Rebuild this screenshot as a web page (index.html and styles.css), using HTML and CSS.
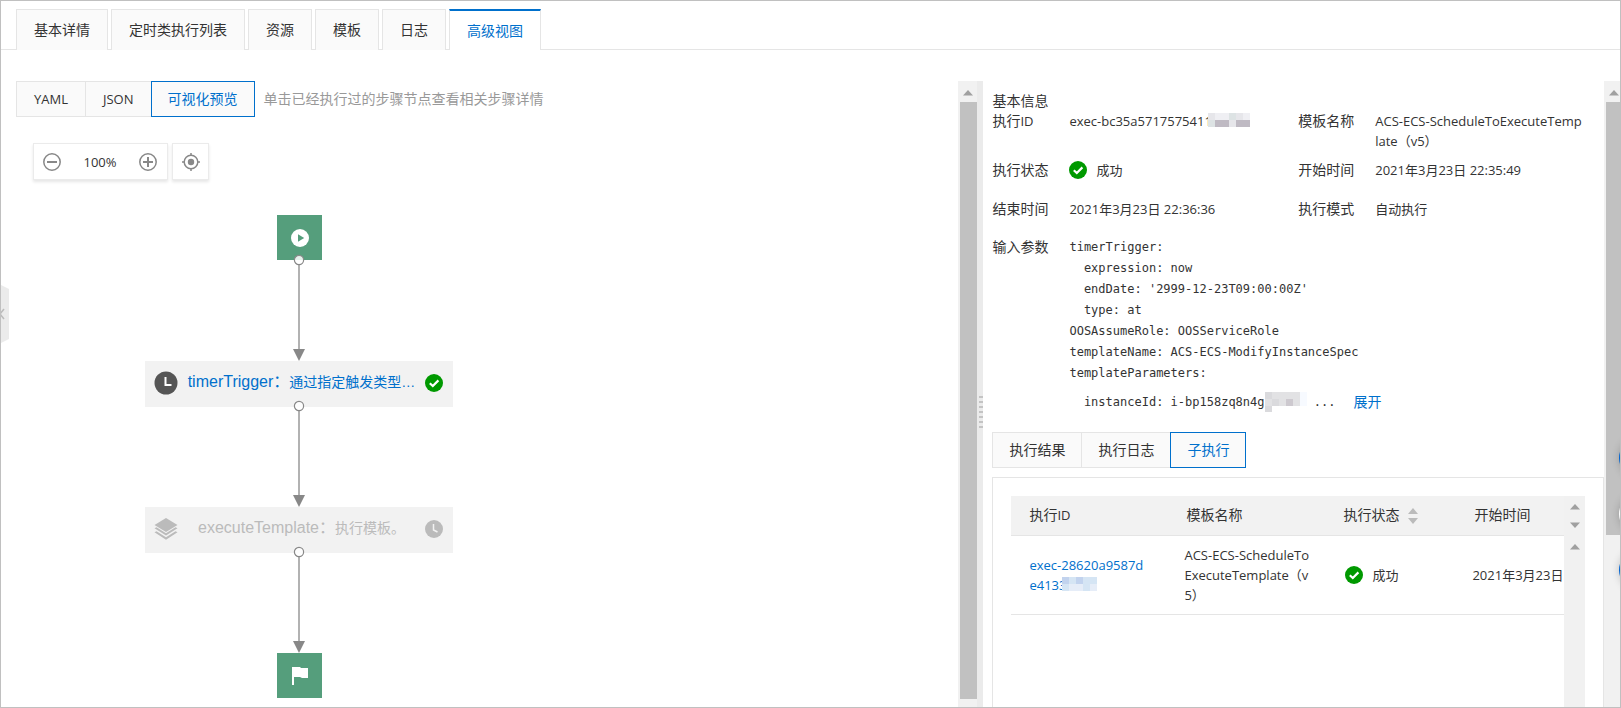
FILE: index.html
```html
<!DOCTYPE html>
<html lang="zh-CN">
<head>
<meta charset="utf-8">
<title>执行详情</title>
<link rel="stylesheet" href="styles.css">
</head>
<body>
<svg class="defs" aria-hidden="true">
  <symbol id="i-ok" viewBox="0 0 18 18"><circle cx="9" cy="9" r="9" fill="#090"/><path d="M4.800 9.200l3 2.800 5.600-5.600" fill="none" stroke="#fff" stroke-width="2.200"/></symbol>
  <symbol id="i-up" viewBox="0 0 10 6"><path d="M0 5.500L5 0l5 5.500z" fill="currentColor"/></symbol>
  <symbol id="i-link" viewBox="0 0 12 108"><path d="M6 10v88" stroke="#999" stroke-width="1.500"/><circle cx="6" cy="6" r="4.600" fill="#fff" fill-opacity=".85" stroke="#888" stroke-width="1.200"/><path d="M0 95h12l-6 12z" fill="#888"/></symbol>
</svg>
<div class="app">
  <nav class="tabs">
    <button class="tab">基本详情</button>
    <button class="tab">定时类执行列表</button>
    <button class="tab">资源</button>
    <button class="tab">模板</button>
    <button class="tab">日志</button>
    <button class="tab tab-on">高级视图</button>
  </nav>

  <div class="split">
    <section class="left">
      <div class="bar">
        <div class="group">
          <button class="seg latin">YAML</button>
          <button class="seg latin">JSON</button>
          <button class="seg seg-on">可视化预览</button>
        </div>
        <span class="hint">单击已经执行过的步骤节点查看相关步骤详情</span>
      </div>
      <div class="zoom">
        <div class="zoom-box">
          <button class="ico" aria-label="缩小"><svg width="18" height="18" viewBox="0 0 18 18" fill="none" stroke="#888" stroke-width="1.500"><circle cx="9" cy="9" r="8.200"/><path d="M4 9h10" stroke-width="2"/></svg></button>
          <span>100%</span>
          <button class="ico" aria-label="放大"><svg width="18" height="18" viewBox="0 0 18 18" fill="none" stroke="#888" stroke-width="1.500"><circle cx="9" cy="9" r="8.200"/><path d="M4 9h10M9 4v10" stroke-width="2"/></svg></button>
        </div>
        <button class="zoom-box locate" aria-label="定位"><svg width="18" height="18" viewBox="0 0 18 18" fill="none" stroke="#888" stroke-width="1.500"><circle cx="9" cy="9" r="6.800"/><path d="M9 0v3M9 15v3M0 9h3M15 9h3"/><circle cx="9" cy="9" r="3.200" fill="#888" stroke="none"/></svg></button>
      </div>
      <div class="canvas">
        <div class="cap cap-start"><svg width="18" height="18" viewBox="0 0 18 18"><circle cx="9" cy="9" r="9" fill="#fff"/><path d="M7 5.200l6.200 3.800L7 12.800z" fill="#559e7c"/></svg></div>
        <div class="node node-a">
          <svg width="24" height="24" viewBox="0 0 24 24"><circle cx="12" cy="12" r="11.500" fill="#555"/><path d="M11.500 6v8H17.500" fill="none" stroke="#fff" stroke-width="2"/></svg>
          <span class="node-text">timerTrigger：<a class="desc" href="#">通过指定触发类型…</a></span>
          <svg width="18" height="18"><use href="#i-ok"/></svg>
        </div>
        <div class="node node-b">
          <svg width="24" height="24" viewBox="0 0 24 24" fill="#bbb"><path d="M12 1l11.500 7L12 15 .5 8z"/><path d="M.5 11.200l2-.9L12 16.200l9.500-5.900 2 .9L12 18.500z"/><path d="M.5 15.200l2-.9L12 20.200l9.500-5.900 2 .9L12 22.800z"/></svg>
          <span class="node-text">executeTemplate：<span class="desc">执行模板。</span></span>
          <svg width="18" height="18" viewBox="0 0 18 18"><circle cx="9" cy="9" r="9" fill="#bbb"/><path d="M8.500 4v6l4 2" fill="none" stroke="#f2f2f2" stroke-width="1.500"/></svg>
        </div>
        <div class="cap cap-end"><svg width="18" height="18" viewBox="0 0 18 18"><path d="M1 0h8l1 1h7v10h-6l-2-1H3v8H1z" fill="#fff"/></svg></div>
        <svg class="link link-1"><use href="#i-link"/></svg>
        <svg class="link link-2"><use href="#i-link"/></svg>
        <svg class="link link-3"><use href="#i-link"/></svg>
      </div>
    </section>

    <div class="scroll"><svg class="arrow"><use href="#i-up"/></svg><div class="thumb"></div></div>
    <div class="grip"><i></i></div>

    <section class="right">
      <h2 class="title">基本信息</h2>
      <dl class="info">
        <dt>执行<span class="latin">ID</span></dt><dd>exec-bc35a5717575411<svg class="mask" width="42" height="14" shape-rendering="crispEdges"><path d="M0 0h42v14H0z" fill="#e6e6ea"/><path d="M7 0h14v7H7zM35 0h7v7h-7z" fill="#efeff3"/><path d="M21 0h7v7h-7zM0 7h7v7H0z" fill="#dde3e4"/><path d="M7 7h14v7H7zM28 7h14v7H28z" fill="#bfbac3"/></svg></dd>
        <dt>模板名称</dt><dd>ACS-ECS-ScheduleToExecuteTemplate（v5）</dd>
      </dl>
      <dl class="info info-gap">
        <dt>执行状态</dt><dd class="status"><svg width="18" height="18"><use href="#i-ok"/></svg>成功</dd>
        <dt>开始时间</dt><dd>2021年3月23日 22:35:49</dd>
        <dt>结束时间</dt><dd>2021年3月23日 22:36:36</dd>
        <dt>执行模式</dt><dd>自动执行</dd>
      </dl>
      <dl class="info params">
        <dt>输入参数</dt>
        <dd><pre class="code">timerTrigger:
  expression: now
  endDate: '2999-12-23T09:00:00Z'
  type: at
OOSAssumeRole: OOSServiceRole
templateName: ACS-ECS-ModifyInstanceSpec
templateParameters:</pre>
          <div class="more"><code class="code">  instanceId: i-bp158zq8n4g</code><svg width="42" height="20" shape-rendering="crispEdges"><path d="M0 0h35v14H0z" fill="#e2e2e4"/><path d="M0 0h7v7H0zM7 7h7v7H7zM0 14h7v6H0z" fill="#dadadd"/><path d="M21 7h7v7h-7z" fill="#cdc9cf"/><path d="M35 0h7v14h-7z" fill="#f7faff"/></svg><code class="code"> ...</code><a class="expand" href="#">展开</a></div>
        </dd>
      </dl>
      <div class="group group-sub">
        <button class="seg">执行结果</button>
        <button class="seg">执行日志</button>
        <button class="seg seg-on">子执行</button>
      </div>
      <div class="panel">
        <div class="table-wrap">
          <table class="table">
            <colgroup><col class="c1"><col class="c1"><col class="c2"><col></colgroup>
            <thead><tr><th>执行<span class="latin">ID</span></th><th>模板名称</th><th>执行状态<svg class="sort" width="10" height="16" viewBox="0 0 10 16"><path d="M0 6l5-6 5 6zM0 10h10l-5 6z" fill="#bbb"/></svg></th><th>开始时间</th></tr></thead>
            <tbody><tr>
              <td><a href="#">exec-28620a9587de4133</a><svg class="mask" width="35" height="14" shape-rendering="crispEdges"><path d="M0 0h35v14H0z" fill="#d5e5f4"/><path d="M0 0h7v7H0zM14 0h7v7h-7z" fill="#c2d3ee"/><path d="M7 7h14v7H7zM28 7h7v7h-7z" fill="#e6edf8"/></svg></td>
              <td class="name">ACS-ECS-ScheduleToExecuteTemplate（v5）</td>
              <td class="state"><div class="status"><svg width="18" height="18"><use href="#i-ok"/></svg>成功</div></td>
              <td class="date">2021年3月23日</td>
            </tr></tbody>
          </table>
        </div>
        <div class="gutter">
          <div class="gutter-head"><svg class="arrow"><use href="#i-up"/></svg><svg class="arrow down"><use href="#i-up"/></svg></div>
          <svg class="arrow"><use href="#i-up"/></svg>
        </div>
      </div>
    </section>
    <div class="scroll scroll-right"><svg class="arrow"><use href="#i-up"/></svg><div class="thumb"></div></div>
  </div>
  <button class="drawer" aria-label="展开侧栏"><svg width="8" height="58" viewBox="0 0 8 58"><path d="M0 0l8 4v50l-8 4z" fill="#ebebeb"/><path d="M3 24l-4 5 4 5" fill="none" stroke="#bbb" stroke-width="1.500"/></svg></button>
  <div class="floats">
    <button class="float" aria-label="消息"></button>
    <button class="float float-light" aria-label="反馈"></button>
    <button class="float" aria-label="帮助"></button>
  </div>
</div>
</body>
</html>
```
FILE: styles.css
```css
* { box-sizing: border-box; }
body { margin: 0; font: 14px/20px "Open Sans", "Noto Sans CJK SC", sans-serif; color: #333; }
button { font: inherit; color: inherit; padding: 0; border: 0; background: none; }
a { color: #0070cc; text-decoration: none; }
svg { display: block; flex: none; }
.defs { position: absolute; width: 0; height: 0; }
.latin { font-size: 13px; }

.app { position: relative; display: flex; flex-direction: column; height: 100vh; border: 1px solid #c0c0c0; overflow: hidden; background: #fff; }

.tabs { display: flex; gap: 3px; padding: 8px 0 0 15px; border-bottom: 1px solid #e5e5e5; }
.tab { height: 41px; margin-bottom: -1px; padding: 0 17px; border: 1px solid #e5e5e5; border-bottom: 0; background: #fafafa; }
.tab-on { border-top: 2px solid #0070cc; background: #fff; color: #0070cc; }

.split { flex: 1; display: flex; min-height: 0; margin-top: 31px; }
.left { position: relative; flex: 957 1 0; min-width: 0; padding-left: 15px; }
.bar { display: flex; align-items: center; gap: 9px; }
.group { display: flex; }
.seg { height: 36px; padding: 0 17px; border: 1px solid #e5e5e5; background: #fafafa; }
.seg + .seg { margin-left: -1px; }
.group-sub .seg { padding: 0 16px; }
.seg-on { padding: 0 16px; border-color: #0070cc; color: #0070cc; }
.hint { color: #999; }

.zoom { display: flex; gap: 4px; padding: 26px 0 0 17px; font-size: 13px; }
.zoom-box { display: flex; align-items: center; justify-content: space-between; width: 135px; height: 37px; padding: 0 10px 0 9px; border: 1px solid #ebebeb; background: #fff; box-shadow: 0 2px 3px rgba(0, 0, 0, .1); }
.locate { width: 37px; justify-content: center; padding: 0; }

.canvas { position: absolute; inset: 0; pointer-events: none; }
.cap { position: absolute; left: 276px; display: flex; align-items: center; justify-content: center; width: 45px; height: 45px; background: #559e7c; }
.cap-start { top: 134px; }
.cap-end { top: 572px; }
.node { position: absolute; left: 144px; display: flex; align-items: center; width: 308px; height: 46px; padding: 0 10px 2px 9px; background: #f2f2f2; }
.node-a { top: 280px; color: #0070cc; }
.node-b { top: 426px; color: #bbb; }
.node-text { flex: 1; padding-bottom: 2px; text-align: center; white-space: nowrap; font: 16px/20px "Liberation Sans", "Noto Sans CJK SC", sans-serif; }
.desc { font-size: 14px; }
.link { position: absolute; left: 292px; width: 12px; height: 108px; }
.link-1 { top: 173px; }
.link-2 { top: 319px; }
.link-3 { top: 465px; }

.scroll { display: flex; flex-direction: column; align-items: flex-end; width: 19px; background: #f1f1f1; }
.scroll .thumb { width: 17px; height: 597px; margin-top: 6px; background: #c1c1c1; }
.scroll .arrow { margin: 9px 4px 0 0; }
.arrow { width: 10px; height: 6px; color: #a0a0a0; }
.scroll-right { width: 16px; }
.scroll-right .thumb { width: 14px; height: 433px; }
.scroll-right .arrow { margin-right: 1px; }
.grip { display: flex; flex-direction: column; align-items: flex-end; width: 6px; padding-top: 315px; background: #ebebeb; }
.grip i { width: 4px; height: 34px; background: repeating-linear-gradient(#c4c4c4 0 2px, #ebebeb 2px 5px); }

.right { flex: 621 1 0; min-width: 0; display: flex; flex-direction: column; padding: 10px 0 0 9px; }
.title { margin: 0; font-size: 14px; font-weight: 400; }
.info { display: grid; grid-template-columns: 77px 1fr 77px 1fr; margin: 0 0 9px; row-gap: 19px; }
.info-gap { margin-bottom: 18px; }
.info dd { margin: 0; padding-right: 20px; font-size: 13px; word-break: break-all; }
.mask { display: inline-block; margin-left: -4px; vertical-align: -1px; }
.status { display: flex; align-items: center; gap: 9px; }
.params { grid-template-columns: 77px 1fr; margin-bottom: 20px; }
.code { margin: 0; font: 12px/21px "DejaVu Sans Mono", monospace; white-space: pre; }
.more { display: flex; align-items: center; height: 28px; padding-top: 8px; }
.expand { margin-left: 18px; font-size: 14px; }

.panel { flex: 1; display: flex; min-height: 0; margin-top: 9px; padding: 18px 18px 0; border: 1px solid #e5e5e5; border-bottom: 0; }
.table-wrap { flex: 1; min-width: 0; overflow: hidden; }
.table { width: 100%; table-layout: fixed; border-collapse: collapse; }
.c1 { width: 157px; }
.c2 { width: 131px; }
.table th { height: 39px; padding: 0 18px; border-bottom: 1px solid #e5e5e5; background: #f2f2f2; font-weight: 400; text-align: left; white-space: nowrap; }
.table td { height: 79px; padding: 9px 18px; border-bottom: 1px solid #e5e5e5; font-size: 13px; word-break: break-all; }
.table .name { padding: 9px 14px 9px 16px; }
.table .state { padding-left: 20px; }
.table .date { padding: 9px 0 9px 16px; white-space: nowrap; }
.sort { display: inline-block; margin-left: 9px; vertical-align: -4px; }
.gutter { display: flex; flex-direction: column; align-items: center; width: 21px; background: #f1f1f1; }
.gutter-head { display: flex; flex-direction: column; justify-content: space-between; height: 39px; margin-bottom: 9px; padding: 8px 0 7px; }
.down { transform: rotate(180deg); }

.drawer { position: absolute; left: 0; top: 284px; }
.floats { position: absolute; right: -39px; top: 437px; display: flex; flex-direction: column; gap: 16px; }
.float { width: 40px; height: 40px; border-radius: 50%; background: #0064d2; box-shadow: 0 0 8px rgba(0, 0, 0, .2); }
.float-light { background: #fff; }
```
